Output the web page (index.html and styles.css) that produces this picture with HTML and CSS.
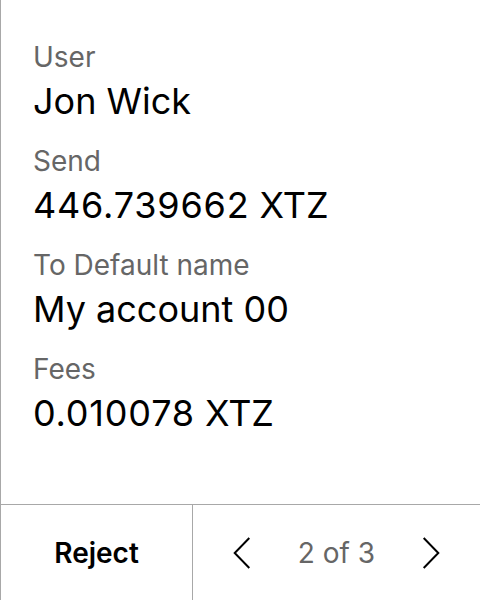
FILE: index.html
```html
<!DOCTYPE html>
<html>
<head>
<meta charset="utf-8">
<link rel="stylesheet" href="styles.css">
</head>
<body>
<div class="screen">
  <div class="content">
    <div class="field">
      <div class="label">User</div>
      <div class="value">Jon Wick</div>
    </div>
    <div class="field">
      <div class="label">Send</div>
      <div class="value"><span class="num">446.739662</span> XTZ</div>
    </div>
    <div class="field">
      <div class="label">To Default name</div>
      <div class="value">My account 00</div>
    </div>
    <div class="field">
      <div class="label">Fees</div>
      <div class="value"><span class="num">0.010078</span> XTZ</div>
    </div>
  </div>
  <div class="footer">
    <div class="reject">Reject</div>
    <div class="pager">
      <svg class="chev" width="18" height="32" viewBox="0 0 18 32"><path d="M16.3 1 L1.7 16 L16.3 31" fill="none" stroke="#000" stroke-width="2"/></svg>
      <span class="count">2 of 3</span>
      <svg class="chev" width="18" height="32" viewBox="0 0 18 32"><path d="M1.7 1 L16.3 16 L1.7 31" fill="none" stroke="#000" stroke-width="2"/></svg>
    </div>
  </div>
</div>
</body>
</html>
```

FILE: styles.css
```css
html, body {
  margin: 0;
  padding: 0;
  background: #fff;
}
body {
  font-family: Inter, "Liberation Sans", sans-serif;
  color: #000;
}
.screen {
  width: 480px;
  height: 600px;
  box-sizing: border-box;
  border-left: 1px solid #a8a8a8;
  display: flex;
  flex-direction: column;
}
.content {
  flex: 1;
  padding: 39px 0 0 32px;
  display: flex;
  flex-direction: column;
}
.field {
  height: 104px;
  flex: none;
}
.label {
  font-size: 28px;
  line-height: 36px;
  color: #666;
}
.value {
  margin-top: 4px;
  font-size: 36px;
  line-height: 44px;
  color: #000;
}
.num {
  letter-spacing: 0.8px;
}
.footer {
  height: 96px;
  box-sizing: border-box;
  border-top: 1px solid #a8a8a8;
  display: flex;
  flex: none;
}
.reject {
  width: 192px;
  box-sizing: border-box;
  border-right: 1px solid #a8a8a8;
  display: flex;
  align-items: center;
  justify-content: center;
  font-size: 28px;
  font-weight: 600;
}
.pager {
  flex: 1;
  display: flex;
  align-items: center;
  justify-content: center;
  gap: 47px;
}
.count {
  font-size: 28px;
  color: #666;
}
.chev {
  display: block;
}
```
